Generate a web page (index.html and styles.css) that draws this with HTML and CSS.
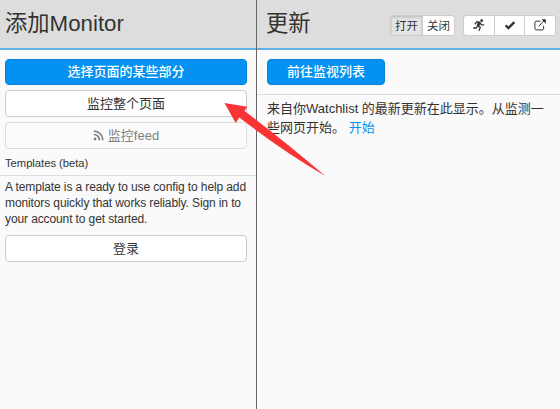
FILE: index.html
```html
<!DOCTYPE html>
<html lang="zh-CN">

<head>
    <meta charset="UTF-8">
    <meta name="viewport" content="width=device-width, initial-scale=1.0">
    <title>Monitor</title>
    <link rel="stylesheet" href="styles.css">
</head>

<body>
    <div class="container">
        <section class="panel panel-left">
            <header class="panel-header">
                <h1>添加Monitor</h1>
            </header>
            <div class="actions">
                <button type="button" class="btn btn-primary">选择页面的某些部分</button>
                <button type="button" class="btn">监控整个页面</button>
                <button type="button" class="btn" disabled>
                    <svg class="icon-feed" viewBox="0 0 11 11" width="11" height="11">
                        <circle cx="2" cy="9" r="1.4" fill="currentColor" />
                        <path d="M.8 4.5A5.7 5.7 0 0 1 6.5 10.2M.8 1.1A9.1 9.1 0 0 1 9.9 10.2" fill="none" stroke="currentColor" stroke-width="1.7" />
                    </svg>
                    <span>监控feed</span>
                </button>
            </div>
            <h2 class="templates-title">Templates (beta)</h2>
            <div class="templates">
                <p>A template is a ready to use config to help add monitors quickly that works reliably. Sign in to your account to get started.</p>
                <button type="button" class="btn">登录</button>
            </div>
        </section>

        <section class="panel panel-right">
            <header class="panel-header">
                <h1>更新</h1>
                <div class="btn-group toggle">
                    <button type="button" class="active">打开</button>
                    <button type="button">关闭</button>
                </div>
                <div class="btn-group tools">
                    <button type="button" aria-label="Run">
                        <svg viewBox="0 0 12 12" width="12" height="12">
                            <circle cx="8.7" cy="1.7" r="1.4" fill="currentColor" />
                            <path d="M2.2 4.8L4 2.7l2.7.6-2 3.3 2.6 1.7-1.1 3M4.4 7.2L3.3 9H.6M7 3.9l1.4 2h2.3" fill="none" stroke="currentColor" stroke-width="1.3" stroke-linecap="round" stroke-linejoin="round" />
                            <path d="M4.8 2.8l2.8.3-.7 3-1 1.2-2-.7z" fill="currentColor" />
                        </svg>
                    </button>
                    <button type="button" aria-label="Mark read">
                        <svg viewBox="0 0 12 12" width="12" height="12">
                            <path d="M1.6 6.3l2.8 2.8 6-6" fill="none" stroke="currentColor" stroke-width="2.3" />
                        </svg>
                    </button>
                    <button type="button" aria-label="Open">
                        <svg viewBox="0 0 12 12" width="12" height="12">
                            <path d="M6.5 2.2H2.2Q.9 2.2.9 3.5v6.1q0 1.3 1.3 1.3h6.1q1.3 0 1.3-1.3V6.8M4.6 7.3l5.5-5.5" fill="none" stroke="currentColor" stroke-width="1" />
                            <path d="M7.4.3h4.4v4.4z" fill="currentColor" />
                        </svg>
                    </button>
                </div>
            </header>
            <div class="watchlist">
                <button type="button" class="btn btn-primary">前往监视列表</button>
            </div>
            <p class="message">来自你Watchlist 的最新更新在此显示。从监测一些网页开始。 <a href="#">开始</a></p>
        </section>
    </div>

    <!-- Pointer to the whole page button -->
    <svg class="arrow" viewBox="0 0 102 74" width="102" height="74">
        <path d="M.5 0L23.3 3.7 20.5 8Q60 37.5 101.3 73 58 47.5 15.3 14.5L11.7 20z" fill="#fa3434" />
    </svg>
</body>

</html>
```
FILE: styles.css
```css
* {
    box-sizing: border-box;
}

body {
    margin: 0;
    font-family: "Liberation Sans", "Noto Sans CJK SC", sans-serif;
    font-size: 13px;
    color: #333;
    background-color: #fafafa;
}

.container {
    display: flex;
    height: 409px;
}

.panel-left {
    width: 257px;
    border-right: 1px solid #666;
}

.panel-right {
    flex: 1;
}

.panel-header {
    display: flex;
    align-items: center;
    height: 50px;
    padding: 0 5px;
    background-color: #ddd;
    border-bottom: 2px solid #62b0e5;
}

.panel-right .panel-header {
    padding: 0 4px 0 9px;
}

h1 {
    margin: 0;
    font-size: 22.3px;
    line-height: 30px;
    font-weight: normal;
    white-space: nowrap;
}

button {
    font-family: inherit;
    color: #333;
    cursor: pointer;
}

.btn {
    display: flex;
    align-items: center;
    justify-content: center;
    width: 100%;
    height: 27px;
    padding: 0;
    font-size: 13px;
    line-height: 20px;
    background-color: #fff;
    border: 1px solid #ccc;
    border-radius: 4px;
}

.btn-primary {
    height: 26px;
    color: #fff;
    font-weight: 500;
    background-color: #0491f1;
    border-color: #0784da;
}

.btn:disabled {
    color: #808080;
    background-color: #fbfbfb;
    border-color: #ddd;
}

.icon-feed {
    margin-right: 4px;
}

.actions {
    display: flex;
    flex-direction: column;
    gap: 5px;
    padding: 9px 9px 0 5px;
}

.templates-title {
    margin: 0;
    padding: 6px 5px 4px;
    font-size: 11.2px;
    font-weight: normal;
    line-height: 16px;
    border-bottom: 1px solid #ddd;
}

.templates {
    padding: 3px 9px 0 5px;
}

.templates p {
    margin: 0 0 8px;
    font-size: 12px;
    line-height: 16px;
    letter-spacing: -0.11px;
}

.btn-group {
    display: flex;
    height: 21px;
    margin-top: 2px;
    border: 1px solid #ccc;
    border-radius: 3px;
    background-color: #fff;
    overflow: hidden;
}

.btn-group button {
    display: flex;
    flex: 1;
    align-items: center;
    justify-content: center;
    padding: 0;
    font-size: 11.5px;
    background: none;
    border: none;
}

.btn-group button + button {
    border-left: 1px solid #ccc;
}

.btn-group .active {
    background-color: #e5e5e5;
    box-shadow: inset 0 1px 3px rgba(0, 0, 0, 0.2);
}

.toggle {
    width: 65px;
    margin-left: auto;
}

.tools {
    width: 93px;
    margin-left: 8px;
}

.watchlist {
    padding: 9px 10px;
    border-bottom: 1px solid #ddd;
}

.watchlist .btn {
    width: 118px;
}

.message {
    margin: 0;
    padding: 5px 10px 0;
    font-size: 13px;
    line-height: 18.5px;
}

.message a {
    color: #0491f1;
    text-decoration: none;
}

.arrow {
    position: absolute;
    left: 224px;
    top: 103px;
}
```
